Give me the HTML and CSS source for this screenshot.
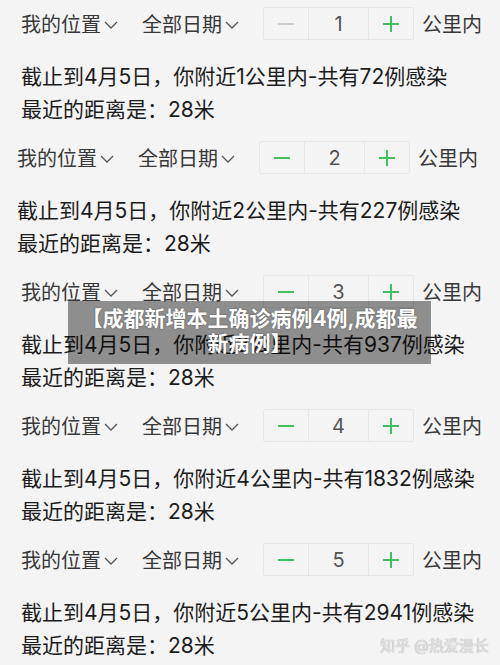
FILE: index.html
```html
<!DOCTYPE html>
<html lang="zh-CN">
  <head>
    <meta charset="UTF-8" />
    <meta name="viewport" content="width=device-width, initial-scale=1.0" />
    <title>附近感染查询</title>
    <link rel="stylesheet" href="styles.css">
  </head>
  <body>
    <main id="page">
      <!-- 每一块是一张截图：选择条 + 两行结果 -->
      <section class="shot">
        <div class="bar">
          <span class="pick">我的位置<svg class="chev" viewBox="0 0 14 8"><polyline points="1,1 7,7 13,1" /></svg></span>
          <span class="pick">全部日期<svg class="chev" viewBox="0 0 14 8"><polyline points="1,1 7,7 13,1" /></svg></span>
          <div class="stepper">
            <span class="btn off"><svg viewBox="0 0 16 16"><line x1="0" y1="8" x2="16" y2="8" /></svg></span>
            <span class="num">1</span>
            <span class="btn"><svg viewBox="0 0 16 16"><line x1="0" y1="8" x2="16" y2="8" /><line x1="8" y1="0" x2="8" y2="16" /></svg></span>
          </div>
          <span class="unit">公里内</span>
        </div>
        <p class="info">截止到4月5日，你附近1公里内-共有72例感染</p>
        <p class="info">最近的距离是：28米</p>
      </section>

      <section class="shot shift">
        <div class="bar">
          <span class="pick">我的位置<svg class="chev" viewBox="0 0 14 8"><polyline points="1,1 7,7 13,1" /></svg></span>
          <span class="pick">全部日期<svg class="chev" viewBox="0 0 14 8"><polyline points="1,1 7,7 13,1" /></svg></span>
          <div class="stepper">
            <span class="btn"><svg viewBox="0 0 16 16"><line x1="0" y1="8" x2="16" y2="8" /></svg></span>
            <span class="num">2</span>
            <span class="btn"><svg viewBox="0 0 16 16"><line x1="0" y1="8" x2="16" y2="8" /><line x1="8" y1="0" x2="8" y2="16" /></svg></span>
          </div>
          <span class="unit">公里内</span>
        </div>
        <p class="info">截止到4月5日，你附近2公里内-共有227例感染</p>
        <p class="info">最近的距离是：28米</p>
      </section>

      <section class="shot">
        <div class="bar">
          <span class="pick">我的位置<svg class="chev" viewBox="0 0 14 8"><polyline points="1,1 7,7 13,1" /></svg></span>
          <span class="pick">全部日期<svg class="chev" viewBox="0 0 14 8"><polyline points="1,1 7,7 13,1" /></svg></span>
          <div class="stepper">
            <span class="btn"><svg viewBox="0 0 16 16"><line x1="0" y1="8" x2="16" y2="8" /></svg></span>
            <span class="num">3</span>
            <span class="btn"><svg viewBox="0 0 16 16"><line x1="0" y1="8" x2="16" y2="8" /><line x1="8" y1="0" x2="8" y2="16" /></svg></span>
          </div>
          <span class="unit">公里内</span>
        </div>
        <p class="info">截止到4月5日，你附近3公里内-共有937例感染</p>
        <p class="info">最近的距离是：28米</p>
      </section>

      <section class="shot">
        <div class="bar">
          <span class="pick">我的位置<svg class="chev" viewBox="0 0 14 8"><polyline points="1,1 7,7 13,1" /></svg></span>
          <span class="pick">全部日期<svg class="chev" viewBox="0 0 14 8"><polyline points="1,1 7,7 13,1" /></svg></span>
          <div class="stepper">
            <span class="btn"><svg viewBox="0 0 16 16"><line x1="0" y1="8" x2="16" y2="8" /></svg></span>
            <span class="num">4</span>
            <span class="btn"><svg viewBox="0 0 16 16"><line x1="0" y1="8" x2="16" y2="8" /><line x1="8" y1="0" x2="8" y2="16" /></svg></span>
          </div>
          <span class="unit">公里内</span>
        </div>
        <p class="info">截止到4月5日，你附近4公里内-共有1832例感染</p>
        <p class="info">最近的距离是：28米</p>
      </section>

      <section class="shot">
        <div class="bar">
          <span class="pick">我的位置<svg class="chev" viewBox="0 0 14 8"><polyline points="1,1 7,7 13,1" /></svg></span>
          <span class="pick">全部日期<svg class="chev" viewBox="0 0 14 8"><polyline points="1,1 7,7 13,1" /></svg></span>
          <div class="stepper">
            <span class="btn"><svg viewBox="0 0 16 16"><line x1="0" y1="8" x2="16" y2="8" /></svg></span>
            <span class="num">5</span>
            <span class="btn"><svg viewBox="0 0 16 16"><line x1="0" y1="8" x2="16" y2="8" /><line x1="8" y1="0" x2="8" y2="16" /></svg></span>
          </div>
          <span class="unit">公里内</span>
        </div>
        <p class="info">截止到4月5日，你附近5公里内-共有2941例感染</p>
        <p class="info">最近的距离是：28米</p>
      </section>

      <!-- 盖在图上的标题条和水印 -->
      <div id="caption">【成都新增本土确诊病例4例,成都最<br />新病例】</div>
      <div id="mark">知乎 @热爱漫长</div>
    </main>
  </body>
</html>
```

FILE: styles.css
```css
* {
  margin: 0;
  padding: 0;
  box-sizing: border-box;
}
body {
  background: #f4f4f4;
  font-family: Inter, "Noto Sans CJK SC", sans-serif;
  color: #1c1c1c;
}
#page {
  position: relative;
  width: 500px;
  height: 665px;
  overflow: hidden;
}
.shot {
  height: 134px;
  padding: 7px 0 0 21px;
}
.shot.shift {
  padding-left: 17px;
}
.bar {
  display: flex;
  align-items: center;
  height: 33px;
}
.pick {
  display: flex;
  align-items: center;
  font-size: 20px;
  color: #383838;
  margin-right: 24px;
}
.chev {
  width: 14px;
  height: 8px;
  margin-left: 3px;
  margin-top: 2px;
  fill: none;
  stroke: #555;
  stroke-width: 1.3;
}
.stepper {
  display: flex;
  height: 33px;
  border: 1px solid #e6e6e6;
  border-radius: 2px;
}
.btn,
.num {
  display: flex;
  align-items: center;
  justify-content: center;
}
.btn {
  width: 44px;
}
.btn svg {
  width: 16px;
  height: 16px;
  stroke: #43bf62;
  stroke-width: 2;
}
.btn.off svg {
  stroke: #cfcfcf;
}
.num {
  width: 61px;
  border-left: 1px solid #e6e6e6;
  border-right: 1px solid #e6e6e6;
  font-size: 20px;
  color: #555;
}
.unit {
  margin-left: 8px;
  font-size: 20px;
  color: #383838;
}
.info {
  font-size: 21px;
  line-height: 33px;
}
.bar + .info {
  margin-top: 20px;
}
#caption {
  position: absolute;
  left: 68px;
  top: 301px;
  width: 363px;
  height: 63px;
  padding-top: 5px;
  background: rgba(0, 0, 0, 0.42);
  color: #fff;
  font-size: 21px;
  font-weight: bold;
  line-height: 25px;
  text-align: center;
  text-shadow: 0 0 2px rgba(0, 0, 0, 0.4);
}
#mark {
  position: absolute;
  left: 380px;
  top: 634px;
  font-size: 15px;
  color: #e2e2e2;
  text-shadow: 0 0 1px #9a9a9a;
}
```
